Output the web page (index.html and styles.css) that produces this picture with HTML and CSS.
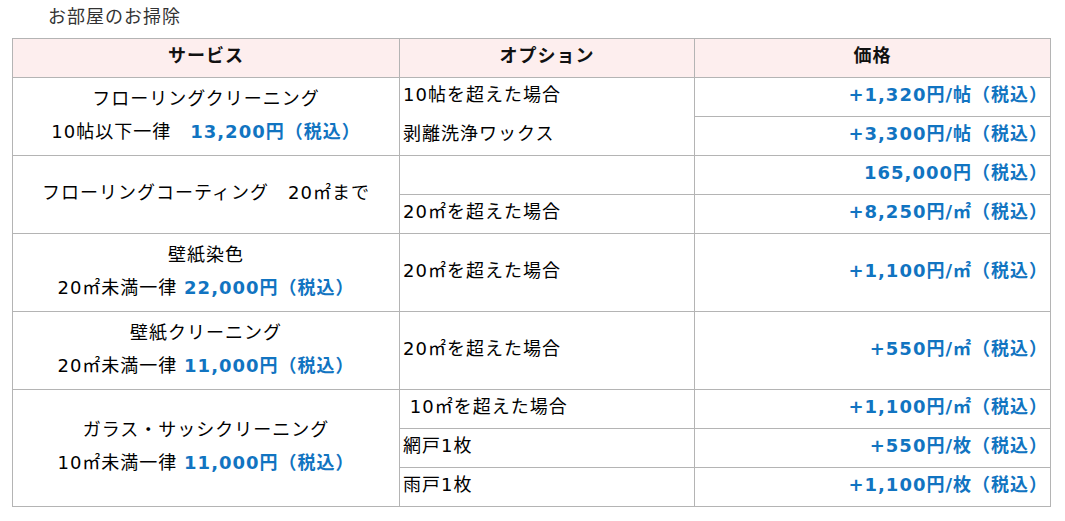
FILE: index.html
```html
<!DOCTYPE html>
<html lang="ja">
<head>
<meta charset="utf-8">
<link rel="stylesheet" href="styles.css">
</head>
<body>
<div class="page">
  <p class="title">お部屋のお掃除</p>
  <table class="price-table">
    <thead>
      <tr>
        <th class="c1">サービス</th>
        <th class="c2">オプション</th>
        <th class="c3">価格</th>
      </tr>
    </thead>
    <tbody>
      <tr>
        <td class="svc" rowspan="2">フローリングクリーニング<br>10帖以下一律　<span class="price">13,200円（税込）</span></td>
        <td class="opt join-top">10帖を超えた場合</td>
        <td class="amt">+1,320円/帖（税込）</td>
      </tr>
      <tr>
        <td class="opt join-bottom">剥離洗浄ワックス</td>
        <td class="amt">+3,300円/帖（税込）</td>
      </tr>
      <tr>
        <td class="svc" rowspan="2">フローリングコーティング　20㎡まで</td>
        <td class="opt"></td>
        <td class="amt">165,000円（税込）</td>
      </tr>
      <tr>
        <td class="opt">20㎡を超えた場合</td>
        <td class="amt">+8,250円/㎡（税込）</td>
      </tr>
      <tr class="tall">
        <td class="svc">壁紙染色<br>20㎡未満一律 <span class="price">22,000円（税込）</span></td>
        <td class="opt">20㎡を超えた場合</td>
        <td class="amt">+1,100円/㎡（税込）</td>
      </tr>
      <tr class="tall">
        <td class="svc">壁紙クリーニング<br>20㎡未満一律 <span class="price">11,000円（税込）</span></td>
        <td class="opt">20㎡を超えた場合</td>
        <td class="amt">+550円/㎡（税込）</td>
      </tr>
      <tr>
        <td class="svc" rowspan="3">ガラス・サッシクリーニング<br>10㎡未満一律 <span class="price">11,000円（税込）</span></td>
        <td class="opt">&nbsp;10㎡を超えた場合</td>
        <td class="amt">+1,100円/㎡（税込）</td>
      </tr>
      <tr>
        <td class="opt">網戸1枚</td>
        <td class="amt">+550円/枚（税込）</td>
      </tr>
      <tr>
        <td class="opt">雨戸1枚</td>
        <td class="amt">+1,100円/枚（税込）</td>
      </tr>
    </tbody>
  </table>
</div>
</body>
</html>
```

FILE: styles.css
```css
html, body {
  margin: 0;
  padding: 0;
  background: #ffffff;
}

body {
  font-family: "DejaVu Sans", "Noto Sans CJK JP", sans-serif;
  font-size: 18px;
  letter-spacing: 1px;
  color: #000000;
}

.page {
  padding: 0 15px 0 12px;
}

.title {
  margin: 0;
  height: 38px;
  line-height: 34px;
  padding-left: 36px;
  color: #333333;
}

.price-table {
  border-collapse: collapse;
  width: 1038px;
  table-layout: fixed;
}

.price-table th,
.price-table td {
  border: 1px solid #b4b4b4;
  padding: 0 3px 4px 3px;
  height: 39px;
  line-height: 20px;
  box-sizing: border-box;
}

.price-table th {
  background: #fdeeee;
  font-weight: bold;
  text-align: center;
  color: #111111;
}

.c1 { width: 387px; }
.c2 { width: 295px; }
.c3 { width: 356px; }

.svc {
  text-align: center;
  line-height: 33px !important;
}

.opt {
  text-align: left;
}

.amt {
  text-align: right;
  padding-right: 2px !important;
  color: #1174c1;
  font-weight: bold;
}

.price {
  color: #1174c1;
  font-weight: bold;
}

.join-top { border-bottom: hidden !important; }
.join-bottom { border-top: hidden !important; }

.tall td { height: 78px; }
```
